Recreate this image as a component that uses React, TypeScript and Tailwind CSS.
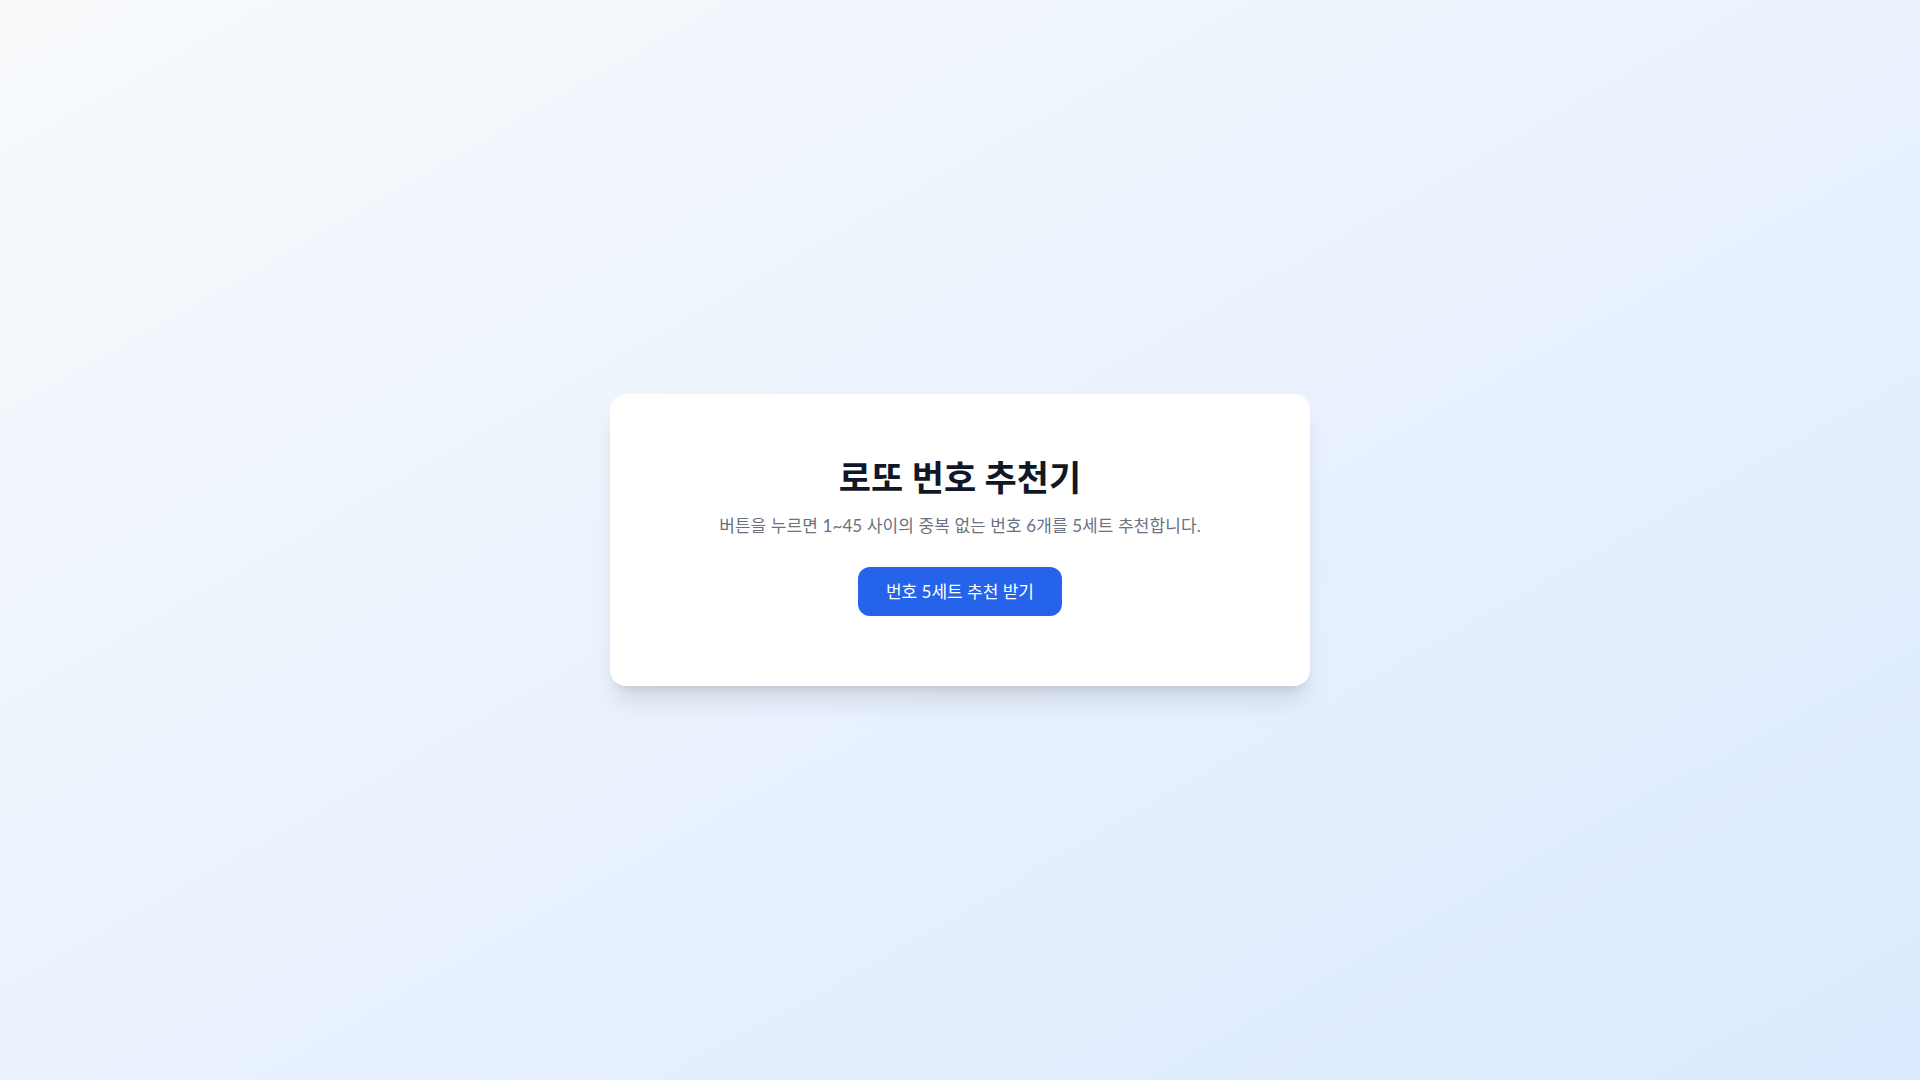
import React from "react";

const App: React.FC = () => {
  return (
    <div
      className="min-h-screen w-full flex items-center justify-center bg-gradient-to-br from-slate-50 to-blue-100"
      style={{ fontFamily: 'Lato, "Noto Sans CJK KR", sans-serif' }}
    >
      <div className="w-[700px] bg-white rounded-2xl shadow-xl px-16 pt-[65px] pb-[70px] flex flex-col items-center">
        <h1 className="text-[35px] leading-9 font-bold text-gray-900">로또 번호 추천기</h1>
        <p className="mt-[19px] text-[17px] leading-6 tracking-[0.1px] text-gray-500">
          버튼을 누르면 1~45 사이의 중복 없는 번호 6개를 5세트 추천합니다.
        </p>
        <button className="mt-[29px] h-[49px] px-7 rounded-xl bg-[#2563eb] text-white text-[17px]">
          번호 5세트 추천 받기
        </button>
      </div>
    </div>
  );
};

export default App;
